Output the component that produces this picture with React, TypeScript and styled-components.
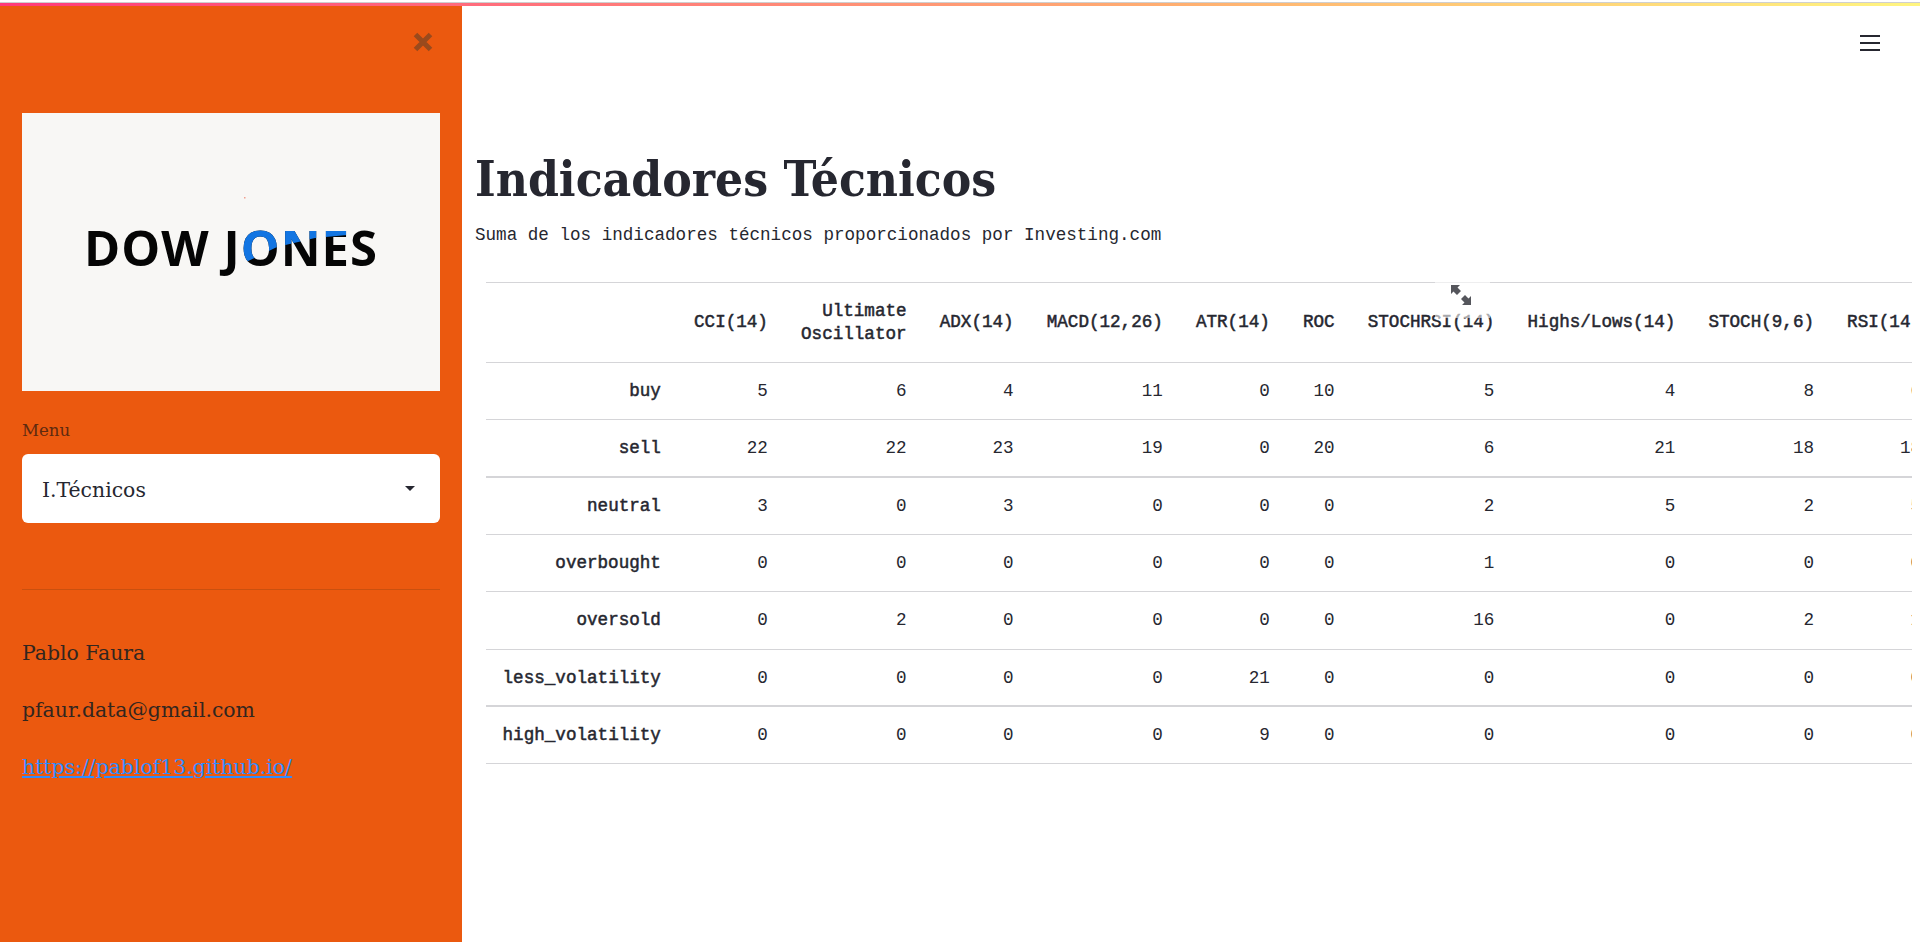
import React from 'react';
import styled, { createGlobalStyle } from 'styled-components';

const GlobalStyle = createGlobalStyle`
  html, body {
    margin: 0;
    padding: 0;
    height: 100%;
    background: #fff;
    overflow: hidden;
  }
  #root {
    height: 100%;
  }
`;

const Page = styled.div`
  height: 942px;
  display: flex;
  flex-direction: column;
  color: #262730;
`;

const Decoration = styled.div`
  height: 3px;
  margin-top: 2px;
  flex: none;
  border-top: 1px solid #cfcfcf;
  background: linear-gradient(90deg, #ff3a78, #ff6b7c 24%, #ffb070 62%, #fff580);
`;

const Body = styled.div`
  flex: 1;
  display: flex;
  min-height: 0;
`;

const Sidebar = styled.aside`
  width: 462px;
  flex: none;
  background: #eb590f;
  padding: 0 22px;
  box-sizing: border-box;
  font-family: 'DejaVu Serif', serif;
`;

const CloseRow = styled.div`
  height: 107px;
  display: flex;
  justify-content: flex-end;
  padding: 26px 7px 0 0;
  box-sizing: border-box;
`;

const LogoBox = styled.div`
  height: 278px;
  background: #f8f7f5;
`;

const MenuLabel = styled.div`
  margin-top: 30px;
  font-size: 16.6px;
  line-height: 20px;
  color: #5e2a10;
`;

const SelectBox = styled.div`
  margin-top: 13px;
  height: 69px;
  background: #fff;
  border-radius: 6px;
  display: flex;
  align-items: center;
  justify-content: space-between;
  padding: 0 25px 0 20px;
  font-size: 20.4px;
`;

const SelectValue = styled.span`
  position: relative;
  top: 1px;
`;

const Caret = styled.span`
  width: 0;
  height: 0;
  border-left: 5px solid transparent;
  border-right: 5px solid transparent;
  border-top: 5px solid #262730;
`;

const Rule = styled.hr`
  margin: 66px 0 0;
  border: none;
  border-top: 1px solid #c9500f;
`;

const Info = styled.p<{ $first?: boolean }>`
  margin: ${(p) => (p.$first ? '49px' : '29px')} 0 0;
  font-size: 20.4px;
  line-height: 28px;
  color: #32261f;
`;

const InfoLink = styled.a`
  color: #2f8cff;
  text-decoration: underline;
`;

const Main = styled.main`
  flex: 1;
  min-width: 0;
  display: flex;
  flex-direction: column;
  position: relative;
  padding: 0 8px 0 13px;
`;

const MenuButton = styled.div`
  display: flex;
  justify-content: flex-end;
  height: 138px;
  padding: 28px 32px 0 0;
  box-sizing: border-box;
`;

const Title = styled.h1`
  margin: 0;
  font-family: 'DejaVu Serif Condensed', 'DejaVu Serif', serif;
  font-weight: 700;
  font-size: 49.2px;
  line-height: 70px;
  color: #262730;
`;

const Subtitle = styled.p`
  margin: 7px 0 0;
  font-family: 'Liberation Mono', monospace;
  font-size: 17.6px;
  line-height: 28px;
`;

const TableFrame = styled.div`
  position: relative;
  margin: 33px 0 0 11px;
  overflow: hidden;
`;

const ExpandButton = styled.div`
  position: absolute;
  top: 0;
  left: 949px;
  width: 55px;
  height: 36px;
  background: rgba(255, 255, 255, 0.6);
  display: flex;
  justify-content: center;
  padding: 2px 4px 0 0;
  box-sizing: border-box;
`;

const DataTable = styled.table`
  border-collapse: collapse;
  font-family: 'Liberation Mono', monospace;
  font-size: 17.6px;
  line-height: 28.16px;
  white-space: nowrap;
  width: max-content;
`;

const HeadCell = styled.th<{ $wrap?: boolean }>`
  padding: 16.5px 16.55px;
  text-align: right;
  font-weight: 400;
  line-height: 23px;
  -webkit-text-stroke: 0.5px #262730;
  border-top: 1px solid #d5d5d8;
  border-bottom: 1px solid #d5d5d8;
  white-space: ${(p) => (p.$wrap ? 'pre-line' : 'nowrap')};
`;

const RowHead = styled.th<{ $heavy?: boolean }>`
  padding: 14.08px 16.55px;
  padding-bottom: ${(p) => (p.$heavy ? '13.08px' : '14.08px')};
  text-align: right;
  font-weight: 400;
  -webkit-text-stroke: 0.5px #262730;
  border-bottom: ${(p) => (p.$heavy ? '2px' : '1px')} solid #d5d5d8;
`;

const Cell = styled.td<{ $heavy?: boolean }>`
  padding: 14.08px 16.55px;
  padding-bottom: ${(p) => (p.$heavy ? '13.08px' : '14.08px')};
  text-align: right;
  border-bottom: ${(p) => (p.$heavy ? '2px' : '1px')} solid #d5d5d8;
`;

const columns = [
  'CCI(14)',
  'Ultimate\nOscillator',
  'ADX(14)',
  'MACD(12,26)',
  'ATR(14)',
  'ROC',
  'STOCHRSI(14)',
  'Highs/Lows(14)',
  'STOCH(9,6)',
  'RSI(14)',
];

const rows: [string, number[]][] = [
  ['buy', [5, 6, 4, 11, 0, 10, 5, 4, 8, 6]],
  ['sell', [22, 22, 23, 19, 0, 20, 6, 21, 18, 18]],
  ['neutral', [3, 0, 3, 0, 0, 0, 2, 5, 2, 5]],
  ['overbought', [0, 0, 0, 0, 0, 0, 1, 0, 0, 0]],
  ['oversold', [0, 2, 0, 0, 0, 0, 16, 0, 2, 1]],
  ['less_volatility', [0, 0, 0, 0, 21, 0, 0, 0, 0, 0]],
  ['high_volatility', [0, 0, 0, 0, 9, 0, 0, 0, 0, 0]],
];

const heavyRows = ['sell', 'less_volatility'];

const CloseIcon = () => (
  <svg width="20" height="20" viewBox="0 0 20 20">
    <path d="M2.5 2.5 L17.5 17.5 M17.5 2.5 L2.5 17.5" stroke="#9a4a1d" strokeWidth="5" />
  </svg>
);

const MenuIcon = () => (
  <svg width="20" height="18" viewBox="0 0 20 18">
    <path d="M0 2 H20 M0 9 H20 M0 16 H20" stroke="#262730" strokeWidth="2" />
  </svg>
);

const ExpandIcon = () => (
  <svg width="22" height="22" viewBox="0 0 22 22">
    <path d="M1 1 H10 L7.5 3.5 L11 7 L7 11 L3.5 7.5 L1 10 Z" fill="#55565c" />
    <path d="M21 21 H12 L14.5 18.5 L11 15 L15 11 L18.5 14.5 L21 12 Z" fill="#55565c" />
  </svg>
);

const DowJonesLogo = () => (
  <svg width="418" height="278" viewBox="0 0 418 278">
    <defs>
      <clipPath id="logo-blue">
        <path d="M218 100 H325 V122 L293 125 L255 134 L222 150 L218 150 Z" />
      </clipPath>
    </defs>
    <rect x="222" y="84" width="1.5" height="1.5" fill="#f0a090" />
    <g fontFamily="'Open Sans', sans-serif" fontWeight="700" fontSize="49">
      <text x="62" y="153" fill="#050505" textLength="293" lengthAdjust="spacing">DOW JONES</text>
      <text x="62" y="153" fill="#1275e2" textLength="293" lengthAdjust="spacing" clipPath="url(#logo-blue)">DOW JONES</text>
    </g>
  </svg>
);

export default function App() {
  return (
    <Page>
      <GlobalStyle />
      <Decoration />
      <Body>
        <Sidebar>
          <CloseRow>
            <CloseIcon />
          </CloseRow>
          <LogoBox>
            <DowJonesLogo />
          </LogoBox>
          <MenuLabel>Menu</MenuLabel>
          <SelectBox>
            <SelectValue>I.Técnicos</SelectValue>
            <Caret />
          </SelectBox>
          <Rule />
          <Info $first>Pablo Faura</Info>
          <Info>pfaur.data@gmail.com</Info>
          <Info>
            <InfoLink href="#">https://pablof13.github.io/</InfoLink>
          </Info>
        </Sidebar>
        <Main>
          <MenuButton>
            <MenuIcon />
          </MenuButton>
          <Title>Indicadores Técnicos</Title>
          <Subtitle>Suma de los indicadores técnicos proporcionados por Investing.com</Subtitle>
          <TableFrame>
            <DataTable>
              <thead>
                <tr>
                  <HeadCell />
                  {columns.map((c) => (
                    <HeadCell key={c} $wrap={c.includes('\n')}>
                      {c}
                    </HeadCell>
                  ))}
                </tr>
              </thead>
              <tbody>
                {rows.map(([name, values]) => {
                  const heavy = heavyRows.includes(name);
                  return (
                    <tr key={name}>
                      <RowHead $heavy={heavy}>{name}</RowHead>
                      {values.map((v, i) => (
                        <Cell key={i} $heavy={heavy}>
                          {v}
                        </Cell>
                      ))}
                    </tr>
                  );
                })}
              </tbody>
            </DataTable>
            <ExpandButton>
              <ExpandIcon />
            </ExpandButton>
          </TableFrame>
        </Main>
      </Body>
    </Page>
  );
}
